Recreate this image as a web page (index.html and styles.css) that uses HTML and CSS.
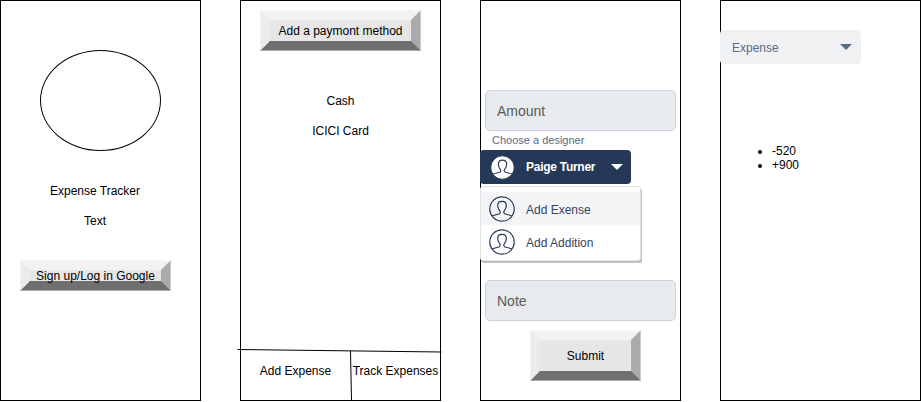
FILE: index.html
```html
<!DOCTYPE html>
<html lang="en">
<head>
<meta charset="utf-8">
<title>Expense Tracker wireframes</title>
<link rel="stylesheet" href="styles.css">
</head>
<body>
<svg class="defs" width="0" height="0">
  <symbol id="person" viewBox="0 0 26 26">
    <circle cx="13" cy="13" r="12.2"/>
    <path d="M3 20C4.5 19 8.5 18.6 10.3 17.7C11.6 17 11.5 15.8 10.6 14.6C9.3 13 8.6 11.3 8.7 9.2C8.8 6.7 10.5 5.3 13 5.3C15.5 5.3 17.2 6.7 17.3 9.2C17.4 11.3 16.7 13 15.4 14.6C14.5 15.8 14.4 17 15.7 17.7C17.5 18.6 21.5 19 23 20"/>
  </symbol>
</svg>
<main class="board">
  <section class="frame login">
    <div class="logo"></div>
    <p class="label title">Expense Tracker</p>
    <p class="label">Text</p>
    <button class="bevel signup">Sign up/Log in Google</button>
  </section>

  <section class="frame payments">
    <button class="bevel add-method">Add a paymont method</button>
    <p class="label cash">Cash</p>
    <p class="label">ICICI Card</p>
    <nav class="tabs"><span class="tab">Add Expense</span><span class="tab">Track Expenses</span></nav>
    <svg class="rules" width="206" height="52" viewBox="0 0 206 52">
      <path d="M.5 .5L204.5 3M113.5 2L114.5 51"/>
    </svg>
  </section>

  <section class="frame entry">
    <div class="field">Amount</div>
    <div class="hint">Choose a designer</div>
    <div class="picker"><svg class="avatar solid" viewBox="0 0 26 26"><use href="#person" width="26" height="26"/></svg><b class="name">Paige Turner</b><svg class="caret" viewBox="0 0 12 6"><path d="M0 0H12L6 6Z"/></svg></div>
    <div class="menu">
      <div class="option active"><svg class="avatar"><use href="#person"/></svg><span>Add Exense</span></div>
      <div class="option"><svg class="avatar"><use href="#person"/></svg><span>Add Addition</span></div>
    </div>
    <div class="field note">Note</div>
    <button class="bevel submit">Submit</button>
  </section>

  <section class="frame history">
    <div class="filter"><span>Expense</span><svg class="caret" viewBox="0 0 12 6"><path d="M0 0H12L6 6Z"/></svg></div>
    <ul class="amounts"><li>-520</li><li>+900</li></ul>
  </section>
</main>
</body>
</html>
```
FILE: styles.css
```css
* { box-sizing: border-box; }
body {
  margin: 0;
  background: #fff;
  color: #000;
  font: 12px/14px "Liberation Sans", Arial, sans-serif;
}
.defs { display: none; }
.board { display: flex; gap: 39px; }
.frame {
  position: relative;
  display: flex;
  flex-direction: column;
  flex: none;
  width: 201px;
  height: 401px;
  border: 1px solid #000;
}
.label { margin: 0 0 16px; text-align: center; white-space: nowrap; }

.bevel {
  display: flex;
  align-items: center;
  justify-content: center;
  flex: none;
  padding: 0;
  border: 10px solid;
  border-color: #f2f2f2 #ababab #707070 #ebebeb;
  background: #e6e6e6;
  color: #000;
  font: inherit;
  white-space: nowrap;
  outline: 1px solid rgba(255, 255, 255, .4);
  outline-offset: -1px;
}

.login { padding-top: 49px; }
.login .label { width: 188px; }
.logo {
  flex: none;
  width: 121px;
  height: 101px;
  margin-left: 39px;
  border: 1px solid #000;
  border-radius: 50%;
}
.login .title { margin-top: 33px; }
.signup { width: 151px; height: 31px; margin: 16px 0 0 19px; }

.payments { padding-top: 9px; }
.add-method { width: 161px; height: 41px; margin-left: 19px; }
.payments .cash { margin-top: 43px; }
.tabs { display: flex; margin-top: auto; height: 36px; }
.tab { flex: none; width: 109px; text-align: center; white-space: nowrap; }
.tab + .tab { width: 91px; }
.rules { position: absolute; left: -4px; top: 348px; }
.rules path { fill: none; stroke: #000; stroke-width: 1; }

.entry { padding-top: 89px; }
.field {
  flex: none;
  width: 191px;
  height: 41px;
  margin-left: 4px;
  padding-left: 11px;
  border: 1px solid #ccd2dd;
  border-radius: 5px;
  background: #e7ebee;
  color: #5a5a5a;
  font-size: 14px;
  line-height: 40px;
}
.hint { height: 19px; padding: 2px 0 0 11px; color: #596a8a; font-size: 11px; line-height: 14px; }
.picker {
  display: flex;
  align-items: center;
  flex: none;
  width: 151px;
  height: 34px;
  margin-left: -1px;
  padding-left: 10px;
  border-radius: 4px;
  background: #253858;
  color: #fff;
}
.avatar { flex: none; width: 26px; height: 26px; fill: none; stroke: #253858; stroke-width: 1.2; }
.avatar.solid { width: 25px; height: 25px; fill: #fff; }
.name { width: 73px; margin-left: 11px; letter-spacing: -.27px; white-space: nowrap; }
.caret { width: 12px; height: 6px; margin-left: 12px; fill: currentColor; }
.menu {
  flex: none;
  width: 161px;
  height: 75px;
  margin: 2px 0 0 -1px;
  padding-top: 5px;
  border: 1px solid #dfe1e5;
  border-radius: 3px;
  background: #fff;
  box-shadow: 1px 2px 0 #c0c0c0, 2px 3px 0 -1px #c0c0c0;
  color: #344563;
}
.option { display: flex; align-items: center; gap: 11px; height: 33px; padding-left: 8px; }
.option span { padding-top: 2px; }
.option.active { background: #f4f5f7; }
.note { margin-top: 19px; }
.submit { width: 111px; height: 51px; margin: 9px 0 0 49px; }

.history { padding-top: 29px; }
.filter {
  display: flex;
  align-items: center;
  justify-content: space-between;
  width: 141px;
  height: 34px;
  margin-left: -1px;
  padding: 0 9px 0 12px;
  border-radius: 4px;
  background: #f0f1f3;
  color: #596a8a;
}
.filter span { padding-top: 2px; }
.amounts { margin: 80px 0 0 11px; padding-left: 40px; }
```
